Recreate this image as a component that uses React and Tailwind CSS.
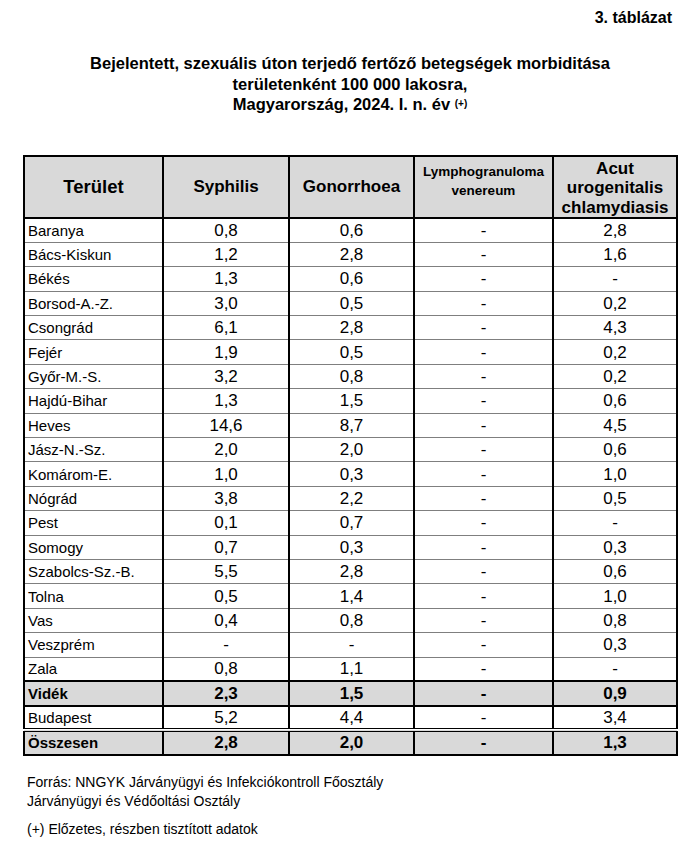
const rows = [
  ["Baranya", "0,8", "0,6", "-", "2,8"],
  ["Bács-Kiskun", "1,2", "2,8", "-", "1,6"],
  ["Békés", "1,3", "0,6", "-", "-"],
  ["Borsod-A.-Z.", "3,0", "0,5", "-", "0,2"],
  ["Csongrád", "6,1", "2,8", "-", "4,3"],
  ["Fejér", "1,9", "0,5", "-", "0,2"],
  ["Győr-M.-S.", "3,2", "0,8", "-", "0,2"],
  ["Hajdú-Bihar", "1,3", "1,5", "-", "0,6"],
  ["Heves", "14,6", "8,7", "-", "4,5"],
  ["Jász-N.-Sz.", "2,0", "2,0", "-", "0,6"],
  ["Komárom-E.", "1,0", "0,3", "-", "1,0"],
  ["Nógrád", "3,8", "2,2", "-", "0,5"],
  ["Pest", "0,1", "0,7", "-", "-"],
  ["Somogy", "0,7", "0,3", "-", "0,3"],
  ["Szabolcs-Sz.-B.", "5,5", "2,8", "-", "0,6"],
  ["Tolna", "0,5", "1,4", "-", "1,0"],
  ["Vas", "0,4", "0,8", "-", "0,8"],
  ["Veszprém", "-", "-", "-", "0,3"],
  ["Zala", "0,8", "1,1", "-", "-"],
];

const narrow = "font-['Liberation_Sans_Narrow','Arial_Narrow','Liberation_Sans',sans-serif]";

function DataRow({ cells, bold = false, gray = false, topCls = "border-t border-t-[#7f7f7f]" }) {
  return (
    <tr className={`h-[24.4px] ${gray ? "bg-[#d9d9d9]" : "bg-white"} ${bold ? "font-bold" : ""}`}>
      {cells.map((c, i) => (
        <td
          key={i}
          className={`${topCls} border-x-2 border-x-black p-0 leading-none ${
            i === 0 ? "text-left pl-[3px] text-[15px]" : "text-center text-[17px]"
          }`}
        >
          {c}
        </td>
      ))}
    </tr>
  );
}

export default function App() {
  return (
    <div className={`w-[700px] h-[847px] bg-white text-black ${narrow}`}>
      <div className="pt-[8px] pr-[28px] text-right font-bold text-[16px] leading-[20px]">
        3. táblázat
      </div>

      <div className="mt-[25px] text-center font-bold text-[16.5px] leading-[20.5px]">
        <div>Bejelentett, szexuális úton terjedő fertőző betegségek morbiditása</div>
        <div>területenként 100 000 lakosra,</div>
        <div>
          Magyarország, 2024. I. n. év{" "}
          <sup className="text-[10px] relative -top-[3px]">(+)</sup>
        </div>
      </div>

      <table className="ml-[23px] mt-[40px] w-[653px] table-fixed border-collapse border-2 border-black">
        <colgroup>
          <col className="w-[139px]" />
          <col className="w-[126px]" />
          <col className="w-[125px]" />
          <col className="w-[139px]" />
          <col className="w-[124px]" />
        </colgroup>
        <thead>
          <tr className="h-[60px] bg-[#d9d9d9] font-bold">
            <th className="border-2 border-black text-[18.5px] leading-none">Terület</th>
            <th className="border-2 border-black text-[17px] leading-none">Syphilis</th>
            <th className="border-2 border-black text-[17px] leading-none">Gonorrhoea</th>
            <th className="border-2 border-black text-[13.5px] leading-[19px] align-top pt-[5px]">
              Lymphogranuloma
              <br />
              venereum
            </th>
            <th className="border-2 border-black text-[17px] leading-[19.5px] pt-[2px]">
              Acut
              <br />
              urogenitalis
              <br />
              chlamydiasis
            </th>
          </tr>
        </thead>
        <tbody>
          {rows.map((r, i) => (
            <DataRow key={r[0]} cells={r} topCls={i === 0 ? "border-t-2 border-t-black" : "border-t border-t-[#7f7f7f]"} />
          ))}
          <DataRow cells={["Vidék", "2,3", "1,5", "-", "0,9"]} bold gray topCls="border-y-2 border-y-black" />
          <DataRow cells={["Budapest", "5,2", "4,4", "-", "3,4"]} topCls="border-t-2 border-t-black" />
          <DataRow cells={["Összesen", "2,8", "2,0", "-", "1,3"]} bold gray topCls="border-t-[4px] border-t-black border-double" />
        </tbody>
      </table>

      <div className="mt-[17px] pl-[27px] font-['Liberation_Sans',Arial,sans-serif] text-[14px] leading-[19px]">
        <div>Forrás: NNGYK Járványügyi és Infekciókontroll Főosztály</div>
        <div>Járványügyi és Védőoltási Osztály</div>
        <div className="mt-[9px]">(+) Előzetes, részben tisztított adatok</div>
      </div>
    </div>
  );
}
